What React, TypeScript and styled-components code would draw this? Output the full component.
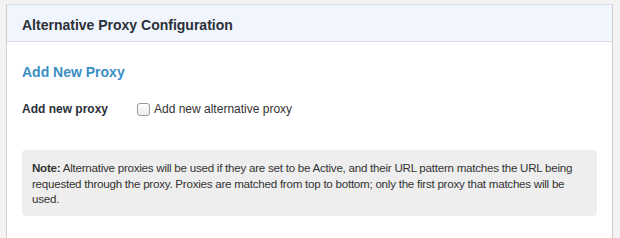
import React, { useState } from 'react';
import styled, { createGlobalStyle } from 'styled-components';

const GlobalStyle = createGlobalStyle`
  html, body {
    margin: 0;
    padding: 0;
    background: #f3f3f3;
    font-family: "Liberation Sans", Arial, Helvetica, sans-serif;
    color: #333;
  }
`;

const Page = styled.div`
  padding: 4px 7px 0 6px;
  height: 238px;
  box-sizing: border-box;
  overflow: hidden;
`;

const Panel = styled.div`
  background: #fff;
  border-left: 1px solid #cfcfcf;
  border-right: 1px solid #cfcfcf;
  height: 260px;
`;

const Header = styled.div`
  background: #f1f5fd;
  border-top: 1px solid #d6dce4;
  border-bottom: 1px solid #d6dce4;
  height: 38px;
  box-sizing: border-box;
  display: flex;
  align-items: center;
  padding: 3px 15px 0 15px;
`;

const Title = styled.h2`
  margin: 0;
  font-size: 14px;
  font-weight: bold;
  color: #2b3038;
`;

const Body = styled.div`
  padding: 21px 15px 0 15px;
`;

const SectionTitle = styled.h3`
  margin: 0;
  font-size: 14px;
  font-weight: bold;
  color: #3a8fc4;
  line-height: 18px;
`;

const FieldRow = styled.div`
  display: flex;
  align-items: center;
  margin-top: 21px;
  font-size: 12px;
`;

const FieldLabel = styled.label`
  width: 115px;
  font-weight: bold;
  color: #2b3038;
`;

const CheckLabel = styled.label`
  display: flex;
  align-items: center;
  gap: 4px;
  color: #333;
`;

const Box = styled.span<{ $checked: boolean }>`
  width: 11px;
  height: 11px;
  border: 1px solid #9a9a9a;
  border-radius: 3px;
  background: ${(p) => (p.$checked ? '#3a8fc4' : 'linear-gradient(#fff, #ececec)')};
  display: inline-block;
`;

const Note = styled.div`
  margin-top: 34px;
  background: #eeeeee;
  border-radius: 4px;
  padding: 10px 6px 9px 10px;
  font-size: 11.6px;
  letter-spacing: -0.25px;
  line-height: 15.5px;
  color: #333;
  white-space: nowrap;
  overflow: hidden;
`;

export default function App() {
  const [checked, setChecked] = useState(false);
  return (
    <>
      <GlobalStyle />
      <Page>
        <Panel>
          <Header>
            <Title>Alternative Proxy Configuration</Title>
          </Header>
          <Body>
            <SectionTitle>Add New Proxy</SectionTitle>
            <FieldRow>
              <FieldLabel>Add new proxy</FieldLabel>
              <CheckLabel onClick={() => setChecked(!checked)}>
                <Box $checked={checked} />
                Add new alternative proxy
              </CheckLabel>
            </FieldRow>
            <Note>
              <b>Note:</b> Alternative proxies will be used if they are set to be Active, and their URL pattern matches
              the URL being
              <br />
              requested through the proxy. Proxies are matched from top to bottom; only the first proxy that matches
              will be
              <br />
              used.
            </Note>
          </Body>
        </Panel>
      </Page>
    </>
  );
}
